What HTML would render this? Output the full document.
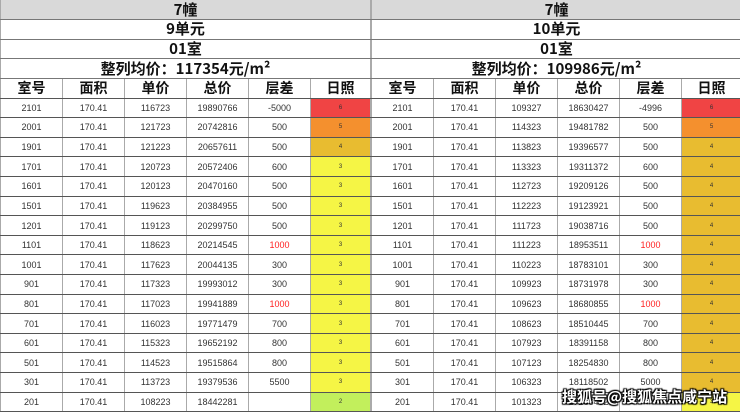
<!DOCTYPE html>
<html><head><meta charset="utf-8">
<style>
*{margin:0;padding:0;box-sizing:border-box}
body{width:740px;height:412px;overflow:hidden;background:#fff;font-family:"Liberation Sans","Noto Sans CJK SC",sans-serif;position:relative}
.wrap{position:absolute;top:0;left:0;display:flex}
table{border-collapse:collapse;table-layout:fixed;width:370px}
td{height:19.62px;text-align:center;vertical-align:middle;border-left:1px solid #aaa;border-right:1px solid #aaa;border-bottom:1px solid #555;font-size:9px;color:#333;padding:0;white-space:nowrap;overflow:hidden}
tr.h td{font-family:"Noto Sans CJK SC",sans-serif;font-weight:bold;font-size:15px;color:#111;border-bottom:1px solid #777;line-height:18px}
tr.g td{background:#d9d9d9}
tr.c td{font-family:"Noto Sans CJK SC",sans-serif;font-weight:bold;font-size:14px;color:#111;line-height:18px}
.r{color:#f22}
td.s6{background:#f04444;font-size:6px}
td.s5{background:#f4902e;font-size:6px}
td.s4{background:#e8bc30;font-size:6px}
td.s3{background:#f5f545;font-size:6px}
td.s2{background:#c2ef5c;font-size:6px}
.wm{position:absolute;left:562px;top:386px;font-family:"Noto Sans CJK SC",sans-serif;font-weight:bold;font-size:15px;color:#fff;text-shadow:0 0 2px #000,1px 1px 1px #000,-1px -1px 1px #000,1px -1px 1px #000,-1px 1px 1px #000;white-space:nowrap}
</style></head><body>
<div class="wrap">
<table>
<colgroup><col style="width:62px"><col style="width:62px"><col style="width:62px"><col style="width:62px"><col style="width:62px"><col style="width:60px"></colgroup>
<tr class="h g"><td colspan="6">7幢</td></tr>
<tr class="h"><td colspan="6">9单元</td></tr>
<tr class="h"><td colspan="6">01室</td></tr>
<tr class="h"><td colspan="6">整列均价：117354元/m²</td></tr>
<tr class="c"><td>室号</td><td>面积</td><td>单价</td><td>总价</td><td>层差</td><td>日照</td></tr>
<tr><td>2101</td><td>170.41</td><td>116723</td><td>19890766</td><td>-5000</td><td class="s6">6</td></tr>
<tr><td>2001</td><td>170.41</td><td>121723</td><td>20742816</td><td>500</td><td class="s5">5</td></tr>
<tr><td>1901</td><td>170.41</td><td>121223</td><td>20657611</td><td>500</td><td class="s4">4</td></tr>
<tr><td>1701</td><td>170.41</td><td>120723</td><td>20572406</td><td>600</td><td class="s3">3</td></tr>
<tr><td>1601</td><td>170.41</td><td>120123</td><td>20470160</td><td>500</td><td class="s3">3</td></tr>
<tr><td>1501</td><td>170.41</td><td>119623</td><td>20384955</td><td>500</td><td class="s3">3</td></tr>
<tr><td>1201</td><td>170.41</td><td>119123</td><td>20299750</td><td>500</td><td class="s3">3</td></tr>
<tr><td>1101</td><td>170.41</td><td>118623</td><td>20214545</td><td class="r">1000</td><td class="s3">3</td></tr>
<tr><td>1001</td><td>170.41</td><td>117623</td><td>20044135</td><td>300</td><td class="s3">3</td></tr>
<tr><td>901</td><td>170.41</td><td>117323</td><td>19993012</td><td>300</td><td class="s3">3</td></tr>
<tr><td>801</td><td>170.41</td><td>117023</td><td>19941889</td><td class="r">1000</td><td class="s3">3</td></tr>
<tr><td>701</td><td>170.41</td><td>116023</td><td>19771479</td><td>700</td><td class="s3">3</td></tr>
<tr><td>601</td><td>170.41</td><td>115323</td><td>19652192</td><td>800</td><td class="s3">3</td></tr>
<tr><td>501</td><td>170.41</td><td>114523</td><td>19515864</td><td>800</td><td class="s3">3</td></tr>
<tr><td>301</td><td>170.41</td><td>113723</td><td>19379536</td><td>5500</td><td class="s3">3</td></tr>
<tr><td>201</td><td>170.41</td><td>108223</td><td>18442281</td><td></td><td class="s2">2</td></tr>
</table>
<table>
<colgroup><col style="width:62px"><col style="width:62px"><col style="width:62px"><col style="width:62px"><col style="width:62px"><col style="width:60px"></colgroup>
<tr class="h g"><td colspan="6">7幢</td></tr>
<tr class="h"><td colspan="6">10单元</td></tr>
<tr class="h"><td colspan="6">01室</td></tr>
<tr class="h"><td colspan="6">整列均价：109986元/m²</td></tr>
<tr class="c"><td>室号</td><td>面积</td><td>单价</td><td>总价</td><td>层差</td><td>日照</td></tr>
<tr><td>2101</td><td>170.41</td><td>109327</td><td>18630427</td><td>-4996</td><td class="s6">6</td></tr>
<tr><td>2001</td><td>170.41</td><td>114323</td><td>19481782</td><td>500</td><td class="s5">5</td></tr>
<tr><td>1901</td><td>170.41</td><td>113823</td><td>19396577</td><td>500</td><td class="s4">4</td></tr>
<tr><td>1701</td><td>170.41</td><td>113323</td><td>19311372</td><td>600</td><td class="s4">4</td></tr>
<tr><td>1601</td><td>170.41</td><td>112723</td><td>19209126</td><td>500</td><td class="s4">4</td></tr>
<tr><td>1501</td><td>170.41</td><td>112223</td><td>19123921</td><td>500</td><td class="s4">4</td></tr>
<tr><td>1201</td><td>170.41</td><td>111723</td><td>19038716</td><td>500</td><td class="s4">4</td></tr>
<tr><td>1101</td><td>170.41</td><td>111223</td><td>18953511</td><td class="r">1000</td><td class="s4">4</td></tr>
<tr><td>1001</td><td>170.41</td><td>110223</td><td>18783101</td><td>300</td><td class="s4">4</td></tr>
<tr><td>901</td><td>170.41</td><td>109923</td><td>18731978</td><td>300</td><td class="s4">4</td></tr>
<tr><td>801</td><td>170.41</td><td>109623</td><td>18680855</td><td class="r">1000</td><td class="s4">4</td></tr>
<tr><td>701</td><td>170.41</td><td>108623</td><td>18510445</td><td>700</td><td class="s4">4</td></tr>
<tr><td>601</td><td>170.41</td><td>107923</td><td>18391158</td><td>800</td><td class="s4">4</td></tr>
<tr><td>501</td><td>170.41</td><td>107123</td><td>18254830</td><td>800</td><td class="s4">4</td></tr>
<tr><td>301</td><td>170.41</td><td>106323</td><td>18118502</td><td>5000</td><td class="s4">4</td></tr>
<tr><td>201</td><td>170.41</td><td>101323</td><td>17266432</td><td></td><td class="s3">3</td></tr>
</table>
</div>
<div class="wm">搜狐号@搜狐焦点咸宁站</div>
</body></html>
